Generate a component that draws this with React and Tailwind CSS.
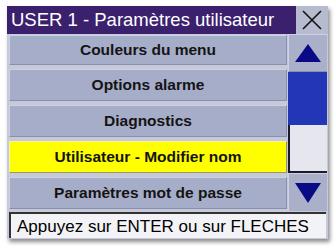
import React from "react";

const rows = [
  { label: "Couleurs du menu", h: "h-[30px]" },
  { label: "Options alarme", h: "h-[32px]" },
  { label: "Diagnostics", h: "h-[32px]" },
  { label: "Utilisateur - Modifier nom", h: "h-[32px]", active: true },
  { label: "Paramètres mot de passe", h: "h-[32px]" },
];

export default function App() {
  return (
    <div
      className="w-[335px] h-[248px] bg-white pt-[6px] pl-[7px]"
      style={{ fontFamily: '"Liberation Sans", Arial, sans-serif' }}
    >
      <div className="w-[321px] h-[233px] bg-[#c5c9d9] flex flex-col shadow-[2px_3px_4px_rgba(0,0,0,0.45)]">
        <div className="flex h-[28px]">
          <div className="flex-1 bg-[#3b206e] text-white text-[18.5px] leading-none flex items-center pl-[4px] whitespace-nowrap overflow-hidden">
            USER 1 - Paramètres utilisateur
          </div>
          <div className="w-[32px] bg-[#b6bbd0] flex items-center justify-center">
            <svg width="22" height="22" viewBox="0 0 22 22">
              <path d="M2 2 L20 20 M20 2 L2 20" stroke="#111" strokeWidth="1.6" fill="none" />
            </svg>
          </div>
        </div>
        <div className="flex h-[177px] pt-[1px]">
          <div className="w-[281px] flex flex-col gap-[4px] pl-[2px] pr-[1px]">
            {rows.map((r) => (
              <div
                key={r.label}
                className={`${r.h} flex items-center justify-center text-[15.5px] font-bold text-[#141414] border-t border-l border-b border-r whitespace-nowrap ${
                  r.active
                    ? "bg-[#ffff00] border-t-[#f4f4a0] border-l-[#f4f4a0] border-b-[#9a9a60] border-r-[#9a9a60]"
                    : "bg-[#a6adc8] border-t-[#cdd1e2] border-l-[#cdd1e2] border-b-[#8a90ac] border-r-[#8a90ac]"
                }`}
              >
                {r.label}
              </div>
            ))}
          </div>
          <div className="flex-1 flex flex-col pr-[1px] -mt-[1px]">
            <div className="h-[38px] bg-[#aab0c9] border-t border-l border-t-[#cdd1e2] border-l-[#cdd1e2] border-b border-b-[#8a90ac] flex items-center justify-center">
              <svg width="26" height="18" viewBox="0 0 26 18">
                <polygon points="13,0 26,18 0,18" fill="#0a0a86" />
              </svg>
            </div>
            <div className="h-[53px] bg-[#2236b6]" />
            <div className="h-[48px] bg-[#e6e6ee] border-l-2 border-b-2 border-[#1a1a2a]" />
            <div className="h-[38px] bg-[#aab0c9] border-t border-l border-t-[#cdd1e2] border-l-[#cdd1e2] flex items-center justify-center">
              <svg width="26" height="20" viewBox="0 0 26 20">
                <polygon points="0,0 26,0 13,20" fill="#0a0a86" />
              </svg>
            </div>
          </div>
        </div>
        <div className="h-[26px] mt-[1px] mx-[2px] bg-[#f3f3f7] border-t-2 border-l-2 border-t-[#333] border-l-[#333] flex items-center pl-[6px] text-[17px] text-black leading-none whitespace-nowrap">
          Appuyez sur ENTER ou sur FLECHES
        </div>
      </div>
    </div>
  );
}
